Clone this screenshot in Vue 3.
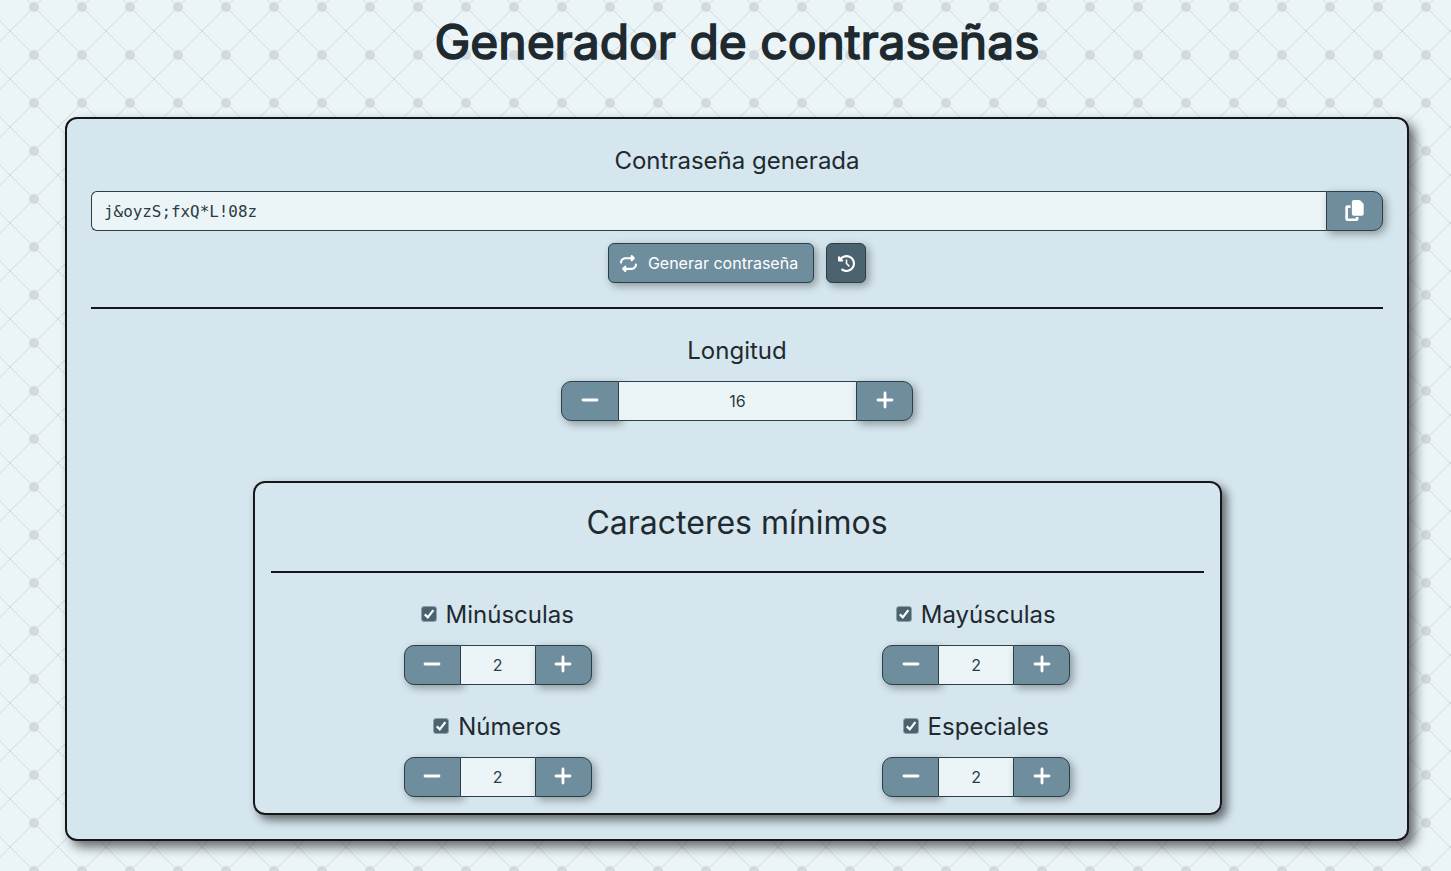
<script setup>
import { reactive, ref } from 'vue'

const password = ref('j&oyzS;fxQ*L!08z')
const length = ref(16)
const groups = reactive([
  { name: 'Minúsculas', min: 2, on: true },
  { name: 'Mayúsculas', min: 2, on: true },
  { name: 'Números', min: 2, on: true },
  { name: 'Especiales', min: 2, on: true },
])
</script>

<template>
  <div class="page">
    <svg class="backdrop" width="100%" height="100%" aria-hidden="true">
      <defs>
        <pattern id="lattice" x="10" y="7" width="48" height="48" patternUnits="userSpaceOnUse">
          <path d="M0 -24L48 24M0 24L48 72M48 -24L0 24M48 24L0 72" />
          <circle cx="24" cy="0" r="5.1" />
          <circle cx="24" cy="48" r="5.1" />
        </pattern>
      </defs>
      <rect width="100%" height="100%" fill="url(#lattice)" />
    </svg>

    <h1>Generador de contraseñas</h1>

    <main class="card">
      <h2>Contraseña generada</h2>
      <div class="field">
        <div class="value password">{{ password }}</div>
        <button class="btn end" aria-label="Copiar">
          <svg class="copy" viewBox="0 0 448 512"><path d="M208 0H332.1c12.7 0 24.9 5.1 33.9 14.1l67.9 67.9c9 9 14.1 21.2 14.1 33.9V336c0 26.5-21.5 48-48 48H208c-26.5 0-48-21.5-48-48V48c0-26.5 21.5-48 48-48zM48 128h80v64H64V448H256V416h64v48c0 26.5-21.5 48-48 48H48c-26.5 0-48-21.5-48-48V176c0-26.5 21.5-48 48-48z" /></svg>
        </button>
      </div>
      <div class="actions">
        <button class="btn generate">
          <svg viewBox="0 0 512 512"><path d="M0 224c0 17.7 14.3 32 32 32s32-14.3 32-32c0-53 43-96 96-96H320v32c0 12.9 7.8 24.6 19.8 29.6s25.7 2.2 34.9-6.9l64-64c12.5-12.5 12.5-32.8 0-45.3l-64-64c-9.2-9.2-22.9-11.9-34.9-6.9S320 19.1 320 32V64H160C71.6 64 0 135.6 0 224zm512 64c0-17.7-14.3-32-32-32s-32 14.3-32 32c0 53-43 96-96 96H192V352c0-12.9-7.8-24.6-19.8-29.6s-25.7-2.2-34.9 6.9l-64 64c-12.5 12.5-12.5 32.8 0 45.3l64 64c9.2 9.2 22.9 11.9 34.9 6.9s19.8-16.6 19.8-29.6V448H352c88.4 0 160-71.6 160-160z" /></svg>
          <span>Generar contraseña</span>
        </button>
        <button class="btn history" aria-label="Historial">
          <svg viewBox="0 0 512 512"><path d="M75 75L41 41C25.9 25.9 0 36.6 0 57.9V168c0 13.3 10.7 24 24 24H134.1c21.4 0 32.1-25.9 17-41l-30.8-30.8C155 85.5 203 64 256 64c106 0 192 86 192 192s-86 192-192 192c-40.8 0-78.6-12.7-109.7-34.4c-14.5-10.1-34.4-6.6-44.6 7.9s-6.6 34.4 7.9 44.6C151.2 495 201.7 512 256 512c141.4 0 256-114.6 256-256S397.4 0 256 0C185.3 0 121.3 28.7 75 75zm181 53c-13.3 0-24 10.7-24 24V256c0 6.4 2.5 12.5 7 17l72 72c9.4 9.4 24.6 9.4 33.9 0s9.4-24.6 0-33.9l-65-65V152c0-13.3-10.7-24-24-24z" /></svg>
        </button>
      </div>

      <hr />

      <h2>Longitud</h2>
      <div class="field stepper wide">
        <button class="btn start" aria-label="Menos" @click="length--">
          <svg class="sign" viewBox="0 0 18 18"><path d="M2 9H16" /></svg>
        </button>
        <div class="value">{{ length }}</div>
        <button class="btn end" aria-label="Más" @click="length++">
          <svg class="sign" viewBox="0 0 18 18"><path d="M2 9H16M9 2V16" /></svg>
        </button>
      </div>

      <section class="panel">
        <h3>Caracteres mínimos</h3>
        <hr />
        <div class="grid">
          <div v-for="g in groups" :key="g.name" class="cell">
            <label>
              <span class="check" @click="g.on = !g.on">
                <svg v-if="g.on" viewBox="0 0 16 16"><path d="M3.2 8.5L6.6 11.8L13 3.6" /></svg>
              </span>
              <span>{{ g.name }}</span>
            </label>
            <div class="field stepper">
              <button class="btn start" aria-label="Menos" @click="g.min--">
                <svg class="sign" viewBox="0 0 18 18"><path d="M2 9H16" /></svg>
              </button>
              <div class="value">{{ g.min }}</div>
              <button class="btn end" aria-label="Más" @click="g.min++">
                <svg class="sign" viewBox="0 0 18 18"><path d="M2 9H16M9 2V16" /></svg>
              </button>
            </div>
          </div>
        </div>
      </section>
    </main>
  </div>
</template>

<style>
body {
  background: #ebf5f8;
  overflow: hidden;
}
</style>

<style scoped>
* {
  box-sizing: border-box;
}
.page {
  position: relative;
  height: 871px;
  padding: 12px 42px 0 65px;
  color: #1f2a30;
  font-family: Inter, "Liberation Sans", sans-serif;
}
.backdrop {
  position: absolute;
  inset: 0;
}
.backdrop path {
  stroke: #d2dae0;
  stroke-width: 1;
  fill: none;
}
.backdrop circle {
  fill: #d2dae0;
}
h1,
h2,
h3 {
  margin: 0;
  text-align: center;
  font-weight: 400;
}
h1 {
  position: relative;
  height: 105px;
  font-size: 48px;
  line-height: 60px;
  -webkit-text-stroke: 1.6px #1f2a30;
}
.card {
  position: relative;
  height: 724px;
  padding: 24px;
  border: 2px solid #17171a;
  border-radius: 12px;
  background: #d5e6ee;
  box-shadow: 6px 6px 12px rgba(0, 0, 0, 0.58);
}
h2 {
  height: 48px;
  font-size: 24px;
  line-height: 36px;
}
.field {
  display: flex;
  height: 40px;
}
.value {
  flex: 1;
  min-width: 0;
  border: 1px solid #2c3e46;
  border-width: 1px 0;
  background: #ebf5f8;
  text-align: center;
  font-size: 16px;
  line-height: 38px;
  color: #2c3a42;
}
.password {
  padding-left: 12px;
  border-left-width: 1px;
  border-radius: 6px 0 0 6px;
  text-align: left;
  font-family: "DejaVu Sans Mono", monospace;
  font-size: 15.9px;
  line-height: 40px;
}
.btn {
  display: flex;
  align-items: center;
  justify-content: center;
  flex: none;
  width: 57px;
  height: 40px;
  padding: 0;
  border: 1px solid #2c3e46;
  border-radius: 6px;
  background: #6e8d9d;
  color: #fff;
  font: inherit;
  font-size: 16px;
  box-shadow: 3px 3px 8px rgba(0, 0, 0, 0.35);
}
.btn svg {
  width: 17px;
  height: 17px;
  fill: #fff;
}
.start {
  border-radius: 10px 0 0 10px;
}
.wide .start {
  width: 58px;
}
.end {
  border-radius: 0 10px 10px 0;
}
.btn .copy {
  width: 19px;
  height: 21px;
  margin-bottom: 2px;
}
.btn .sign {
  width: 18px;
  height: 18px;
  margin-bottom: 2px;
  fill: none;
  stroke: #fff;
  stroke-width: 2.8;
  stroke-linecap: round;
}
.actions {
  display: flex;
  justify-content: center;
  gap: 12px;
  margin-top: 12px;
}
.btn.generate {
  width: 206px;
  gap: 11px;
  padding-right: 4px;
}
.btn.history {
  width: 40px;
  background: #4b626f;
}
hr {
  height: 2px;
  margin: 24px 0;
  border: 0;
  background: #17171a;
}
.stepper {
  width: 188px;
}
.stepper.wide {
  width: 352px;
  margin: 0 auto;
}
.panel {
  width: 969px;
  height: 334px;
  margin: 60px auto 0;
  padding: 16px;
  border: 2px solid #17171a;
  border-radius: 12px;
  box-shadow: 5px 5px 10px rgba(0, 0, 0, 0.55);
}
h3 {
  height: 48px;
  font-size: 32px;
  line-height: 48px;
}
.grid {
  display: grid;
  grid-template-columns: 1fr 1fr;
  gap: 24px;
}
.cell {
  display: flex;
  flex-direction: column;
  align-items: center;
}
label {
  display: flex;
  align-items: center;
  gap: 9px;
  height: 35px;
  margin-bottom: 13px;
  padding-right: 1px;
  font-size: 24px;
}
.check {
  display: block;
  width: 16px;
  height: 16px;
  margin-bottom: 1px;
  border: 1px solid #8ba0ad;
  border-radius: 3px;
  background: #4b626f;
}
.check svg {
  display: block;
  width: 14px;
  height: 14px;
}
.check path {
  fill: none;
  stroke: #fff;
  stroke-width: 2.6;
}
</style>
